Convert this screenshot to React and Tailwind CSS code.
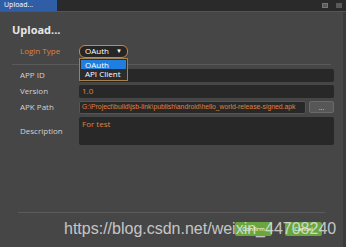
export default function App() {
  return (
    <div
      className="relative w-[346px] h-[247px] overflow-hidden bg-[#464646] text-[8px] text-[#d2d2d2]"
      style={{ fontFamily: '"Open Sans", "Liberation Sans", sans-serif' }}
    >
      {/* title bar */}
      <div className="flex h-[12px] items-stretch justify-between bg-[#2a2a2a] border-b border-[#555]">
        <div className="flex w-[57px] items-center bg-[#2f5da6] pl-[4px] text-[7px] text-white">
          Upload...
        </div>
        <div className="flex items-center gap-[8px] pr-[4px]">
          <div className="h-[5px] w-[6px] bg-[#5a5a5a] border border-[#777]" />
          <div className="h-[5px] w-[6px] bg-[#5a5a5a]" />
        </div>
      </div>

      <div className="flex h-[235px] border-r-[3px] border-[#3a3a3a]">
        <div className="flex min-w-0 flex-1 flex-col">
          <div className="pl-[12px] pt-[10px] text-[11px] font-bold text-[#e6e6e6]">Upload...</div>

          {/* login type */}
          <div className="relative mt-[6px] flex items-center pl-[20px]">
            <div className="w-[59px] text-[#e0803e]">Login Type</div>
            <div className="flex h-[13px] w-[49px] items-center justify-between rounded-[6px] border border-[#c7884a] bg-[#262626] px-[5px] text-white">
              <span>OAuth</span>
              <span className="text-[6px]">▼</span>
            </div>
            <div className="absolute left-[79px] top-[13px] z-10 w-[49px] border border-[#a3804f] bg-[#2c2c2c] p-[1px] text-white">
              <div className="h-[9px] bg-[#1f7fe0] pl-[4px] leading-[9px]">OAuth</div>
              <div className="h-[10px] pl-[4px] leading-[10px]">API Client</div>
            </div>
          </div>

          <div className="mx-[12px] mt-[6px] h-px bg-[#5a5a5a]" />

          <div className="mt-[4px] flex flex-col gap-[3px] pl-[20px] pr-[9px]">
            <div className="flex items-center">
              <div className="w-[59px] shrink-0">APP ID</div>
              <div className="h-[13px] min-w-0 flex-1 rounded-[2px] bg-[#282828]" />
            </div>
            <div className="flex items-center">
              <div className="w-[59px] shrink-0">Version</div>
              <div className="flex h-[13px] min-w-0 flex-1 items-center rounded-[2px] bg-[#282828] px-[3px] text-[#e0803e]">1.0</div>
            </div>
            <div className="flex items-center">
              <div className="w-[59px] shrink-0">APK Path</div>
              <div
                className="flex h-[13px] min-w-0 flex-1 items-center overflow-hidden whitespace-nowrap rounded-[2px] border border-[#555] bg-[#282828] px-[2px] text-[6.8px] text-[#e0803e]"
                style={{ fontFamily: '"Liberation Sans", Arial, sans-serif' }}
              >
                G:\Project\build\jsb-link\publish\android\hello_world-release-signed.apk
              </div>
              <div className="ml-[3px] flex h-[12px] w-[25px] shrink-0 items-center justify-center rounded-[2px] border border-[#6a6a6a] bg-[#575757] text-[7px] leading-none">...</div>
            </div>
            <div className="flex items-center">
              <div className="w-[59px] shrink-0">Description</div>
              <div className="h-[28px] min-w-0 flex-1 rounded-[2px] bg-[#282828] px-[3px] pt-[1px] text-[#e0803e]">For test</div>
            </div>
          </div>

          <div className="mx-[18px] mt-auto h-px bg-[#5c5c5c]" />
          <div className="flex justify-end gap-[13px] pb-[11px] pr-[21px] pt-[9px]">
            <div className="flex h-[14px] w-[37px] items-center justify-center rounded-[2px] bg-[#69a640] text-[6px] text-white">Confirm</div>
            <div className="flex h-[14px] w-[37px] items-center justify-center rounded-[2px] bg-[#69a640] text-[6px] text-white">Cancel</div>
          </div>
        </div>
      </div>

      {/* watermark */}
      <div
        className="pointer-events-none absolute left-[64px] top-[217px] text-[16px] text-[#e8e8e8]/80"
        style={{ fontFamily: '"Liberation Sans", Arial, sans-serif' }}
      >
        https://blog.csdn.net/weixin_44708240
      </div>
    </div>
  );
}
